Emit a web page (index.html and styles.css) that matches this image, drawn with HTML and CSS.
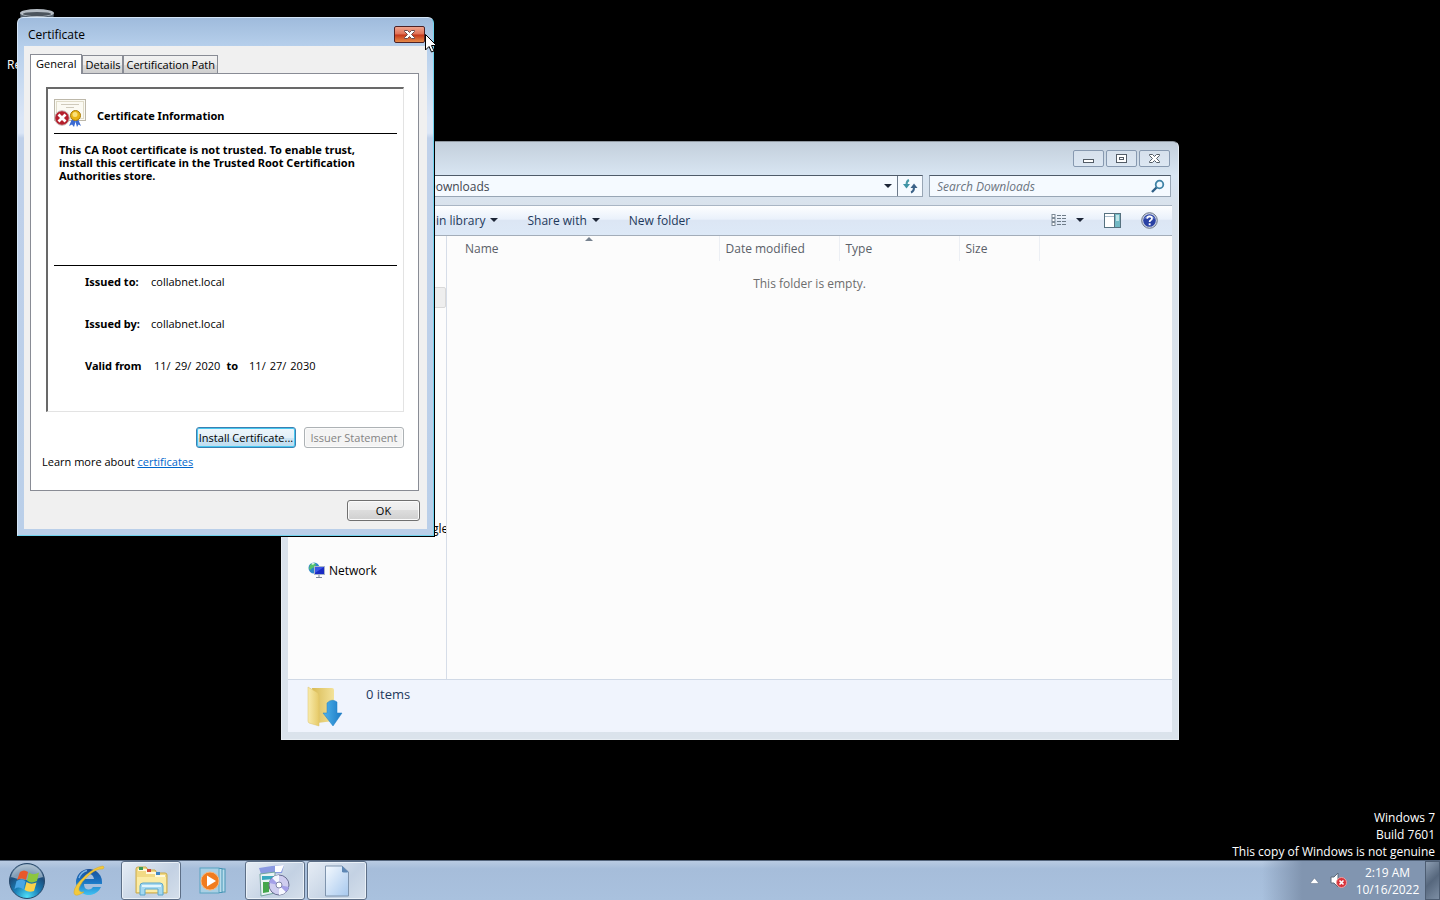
FILE: index.html
```
<!DOCTYPE html>
<html lang="en">
<head>
<meta charset="utf-8">
<meta name="viewport" content="width=device-width, initial-scale=1.0">
  <title>Desktop</title>
  <link rel="stylesheet" href="styles.css">
</head>
<body>

  <main class="desktop">
    <div class="desktop-icon">
      <svg width="36" height="48" viewBox="0 0 36 48">
        <path d="M1 5 L6 47 H30 L35 5Z" fill="#56626e"/>
        <ellipse cx="18" cy="5" rx="17" ry="4" fill="#b4bcc4"/>
        <ellipse cx="18" cy="6" rx="14" ry="2" fill="#4c555e"/>
      </svg>
      <span>Re</span>
    </div>

    <!-- explorer -->
    <section class="window explorer">
      <header class="explorer-title">
        <button class="caption" aria-label="Minimize">
          <svg width="13" height="11" viewBox="0 0 13 11"><rect x="1.5" y="6.5" width="10" height="3" fill="#fff" stroke="#535c66"/></svg>
        </button>
        <button class="caption" aria-label="Maximize">
          <svg width="13" height="11" viewBox="0 0 13 11"><rect x="1.5" y="1.5" width="10" height="8" fill="#fff" stroke="#535c66"/><rect x="4.5" y="4.5" width="4" height="2" fill="#fff" stroke="#535c66"/></svg>
        </button>
        <button class="caption" aria-label="Close">
          <svg width="13" height="11" viewBox="0 0 13 11"><path d="M1.500 1.500H4.500L6.500 3.500L8.500 1.500H11.500V2.500L8.500 5.500L11.500 8.500V9.500H8.500L6.500 7.500L4.500 9.500H1.500V8.500L4.500 5.500L1.500 2.500Z" fill="#fff" stroke="#535c66"/></svg>
        </button>
      </header>

      <div class="explorer-nav">
        <div class="address">
          <span class="address-text">Downloads</span>
          <button class="drop" aria-label="Previous locations"><i class="caret"></i></button>
          <button class="refresh" aria-label="Refresh">
            <svg width="16" height="16" viewBox="0 0 16 16">
              <path d="M7 2 Q4.500 3 4.500 7" fill="none" stroke="#4a9aa8" stroke-width="2"/>
              <path d="M1 6 H8 L4.500 10.500Z" fill="#3e93a5"/>
              <path d="M9 14.500 Q12 13.500 12 9.500" fill="none" stroke="#3b6288" stroke-width="2"/>
              <path d="M8.500 10 H15.500 L12 5.500Z" fill="#3b6288"/>
            </svg>
          </button>
        </div>
        <div class="search">
          <input type="text" placeholder="Search Downloads" aria-label="Search Downloads">
          <svg width="14" height="14" viewBox="0 0 14 14">
            <path d="M1 13 L6 8" stroke="#2f5f86" stroke-width="2.4"/>
            <circle cx="8.5" cy="5.5" r="3.8" fill="#eef8ff" stroke="#3f83a6" stroke-width="1.8"/>
          </svg>
        </div>
      </div>

      <div class="toolbar">
        <button class="tool">Include in library <i class="caret"></i></button>
        <button class="tool">Share with <i class="caret"></i></button>
        <button class="tool">New folder</button>
        <div class="toolbar-right">
          <button class="tool" aria-label="Change your view">
            <svg width="16" height="14" viewBox="0 0 16 14">
              <g fill="#fff" stroke="#7d8a97"><rect x="1" y="1.500" width="3" height="3"/><rect x="1" y="5.500" width="3" height="3"/><rect x="1" y="9.500" width="3" height="3"/></g>
              <path d="M6 2.500H10M11 2.500H15M6 5.500H10M11 5.500H15M6 8.500H10M11 8.500H15M6 11.500H10M11 11.500H15" stroke="#6d7b88"/>
            </svg>
            <i class="caret"></i>
          </button>
          <button class="tool" aria-label="Show the preview pane">
            <svg width="17" height="15" viewBox="0 0 17 15">
              <rect x="0.500" y="0.500" width="16" height="14" fill="#fff" stroke="#56717f"/>
              <path d="M1 3.500H10" stroke="#a9bccb"/>
              <rect x="10" y="1" width="6" height="13" fill="#73b9c4"/>
              <path d="M10.500 1V14" stroke="#56717f"/>
              <rect x="12" y="2" width="3" height="6" fill="#bfe4e8"/>
            </svg>
          </button>
          <button class="tool" aria-label="Get help">
            <svg width="17" height="17" viewBox="0 0 17 17">
              <circle cx="8.500" cy="8.500" r="7.800" fill="#cfd6e4" stroke="#6a7488"/>
              <circle cx="8.500" cy="8.500" r="6.300" fill="#2a41a4"/>
              <path d="M3 7 A6 6 0 0 1 14 7 Q8 4 3 7Z" fill="#6f86d2"/>
              <path d="M6.200 6.800 Q6.200 4.400 8.600 4.400 Q11 4.400 11 6.400 Q11 7.600 9.600 8.300 Q8.600 8.900 8.600 10" fill="none" stroke="#fff" stroke-width="1.700"/>
              <rect x="7.700" y="11.300" width="1.900" height="1.900" fill="#fff"/>
            </svg>
          </button>
        </div>
      </div>

      <div class="explorer-body">
        <nav class="tree">
          <div class="tree-selected"></div>
          <div class="tree-drive">gle</div>
          <div class="tree-item">
            <svg width="17" height="17" viewBox="0 0 17 17">
              <circle cx="6" cy="6" r="5.500" fill="#2b86c8"/>
              <path d="M2 3 Q5 0 8 2 Q7 6 4 6 Q3 9 1 7Z" fill="#55c26b"/>
              <path d="M3 2 Q5 0 7 1 L5 3Z" fill="#d7f5e0"/>
              <rect x="6.500" y="4.500" width="10" height="8" fill="#1a2bc4" stroke="#a8b4c8"/>
              <path d="M7 5H16L7 11Z" fill="#3b56e6"/>
              <path d="M11 13V15M8 15.500H14" stroke="#7c8798"/>
            </svg>
            <a href="#">Network</a>
          </div>
        </nav>
        <div class="files">
          <table>
            <thead>
              <tr>
                <th class="col-name">Name<i class="sort"></i></th>
                <th class="col">Date modified</th>
                <th class="col">Type</th>
                <th class="col-size">Size</th>
                <th></th>
              </tr>
            </thead>
            <tbody>
              <tr><td colspan="5">This folder is empty.</td></tr>
            </tbody>
          </table>
        </div>
      </div>

      <footer class="details">
        <svg width="40" height="44" viewBox="0 0 40 44">
          <defs>
            <linearGradient id="fold" x1="0" x2="1"><stop offset="0" stop-color="#f8ebac"/><stop offset="1" stop-color="#e6ca68"/></linearGradient>
            <linearGradient id="back" x1="0" x2="1"><stop offset="0" stop-color="#d9bb55"/><stop offset="1" stop-color="#f3e29a"/></linearGradient>
            <linearGradient id="arrow" x1="0" x2="1"><stop offset="0" stop-color="#4fb4ec"/><stop offset="1" stop-color="#1c79c4"/></linearGradient>
          </defs>
          <path d="M6 3 H26 Q28 3 28 5 V36 L11 38Z" fill="url(#back)"/>
          <path d="M2 2 L12 8 Q13 9 13 11 V41 L3 38 Q2 37 2 36Z" fill="url(#fold)" stroke="#dcc064" stroke-width="0.500"/>
          <path d="M21 18 Q26 13 31 17 V28 H36 L27 41 L17 28 H21Z" fill="url(#arrow)" stroke="#1d7fc4" stroke-width="0.500"/>
        </svg>
        <span>0 items</span>
      </footer>
    </section>

    <!-- certificate dialog -->
    <section class="window cert">
      <header class="cert-title">
        <span>Certificate</span>
        <button class="cert-close" aria-label="Close">
          <svg width="13" height="11" viewBox="0 0 13 11"><path d="M1.500 1.500H4.500L6.500 3.500L8.500 1.500H11.500V2.500L8.500 5.500L11.500 8.500V9.500H8.500L6.500 7.500L4.500 9.500H1.500V8.500L4.500 5.500L1.500 2.500Z" fill="#fff" stroke="#6b4a4a"/></svg>
        </button>
      </header>
      <div class="cert-body">
        <div class="tabs">
          <button class="tab tab-active">General</button>
          <button class="tab">Details</button>
          <button class="tab">Certification Path</button>
        </div>
        <div class="panel">
          <div class="info">
            <div class="info-head">
              <svg width="32" height="30" viewBox="0 0 32 30">
                <rect x="0.500" y="1.500" width="31" height="21" fill="#fbfaf3" stroke="#bdb8aa"/>
                <rect x="2.500" y="3.500" width="27" height="17" fill="none" stroke="#e0dcc9"/>
                <path d="M7 6.500H25M12 9.500H20" stroke="#cfcabb"/>
                <path d="M18 21 L15 28 L18 26.500 L20 29 L22 22Z M24 21 L27 28 L24.500 26.500 L23 29 L21 22Z" fill="#3c6bd2"/>
                <circle cx="21.500" cy="17.500" r="5" fill="#e9b416" stroke="#a97c0c"/>
                <circle cx="21" cy="16.500" r="2.500" fill="#fbe27a"/>
                <circle cx="8" cy="20" r="7.300" fill="#b51f2c" stroke="#c9bcbc"/>
                <path d="M4.500 16.500 L11.500 23.500 M11.500 16.500 L4.500 23.500" stroke="#fff" stroke-width="2.800"/>
              </svg>
              <b>Certificate Information</b>
            </div>
            <p class="message">This CA Root certificate is not trusted. To enable trust, install this certificate in the Trusted Root Certification Authorities store.</p>
            <dl class="fields">
              <div><dt>Issued to:</dt><dd>collabnet.local</dd></div>
              <div><dt>Issued by:</dt><dd>collabnet.local</dd></div>
              <div class="valid"><dt>Valid from</dt><dd><span>11/</span><span>29/</span><span>2020</span><b>to</b><span>11/</span><span>27/</span><span>2030</span></dd></div>
            </dl>
          </div>
          <div class="actions">
            <button class="btn btn-focus">Install Certificate...</button>
            <button class="btn" disabled>Issuer Statement</button>
          </div>
          <p class="learn">Learn more about <a href="#">certificates</a></p>
        </div>
        <div class="cert-footer">
          <button class="btn btn-ok">OK</button>
        </div>
      </div>
    </section>

    <div class="watermark">
      <p>Windows 7</p>
      <p>Build 7601</p>
      <p>This copy of Windows is not genuine</p>
    </div>

    <svg class="cursor" width="12" height="19" viewBox="0 0 12 19">
      <path d="M0.500 0.500 V16 L4 12.500 L6.500 18 L9 17 L6.500 11.500 H11.500Z" fill="#fff" stroke="#000"/>
    </svg>
  </main>

  <footer class="taskbar">
    <button class="start" aria-label="Start">
      <svg width="38" height="38" viewBox="0 0 38 38">
        <defs>
          <radialGradient id="orb" cx="0.5" cy="0.95" r="0.9"><stop offset="0" stop-color="#4fe0f8"/><stop offset="0.4" stop-color="#1a80b8"/><stop offset="0.75" stop-color="#1d4c7a"/><stop offset="1" stop-color="#7f9bb5"/></radialGradient>
        </defs>
        <circle cx="19" cy="19" r="17.500" fill="url(#orb)" stroke="#27486a"/>
        <path d="M3 15 A16.500 16.500 0 0 1 35 15 Q19 21 3 15Z" fill="#d2dee8" opacity="0.550"/>
        <path d="M12 10 Q16 7 20 10 L18 18 Q14 15 9 18Z" fill="#e8582a"/>
        <path d="M21 10.500 Q25 14 31 10.500 L29 19 Q23 22 19 18.500Z" fill="#8cc63e"/>
        <path d="M8.500 19 Q13 16 17.500 19 L15.500 27.500 Q11 24 6.500 27Z" fill="#4aa6e4"/>
        <path d="M18.500 20 Q23 23 28.500 20.500 L26 29 Q21 31 16.500 28Z" fill="#fbd24a"/>
      </svg>
    </button>
    <button class="task" aria-label="Internet Explorer">
      <svg width="34" height="34" viewBox="0 0 34 34">
        <defs><linearGradient id="ie" x1="0" y1="0" x2="0" y2="1"><stop offset="0" stop-color="#1c4f98"/><stop offset="0.5" stop-color="#1b75c4"/><stop offset="1" stop-color="#3ec2f2"/></linearGradient></defs>
        <path d="M30 18 A13 13 0 1 0 29 23 H21 Q19 26 16 25.500 Q12 25 12 20 H30Z M12 15 Q13 10 17 10 Q21 10 22 15Z" fill="url(#ie)" fill-rule="evenodd"/>
        <path d="M7 14 Q9 8 15 6.500" fill="none" stroke="#7fb5e6" stroke-width="1.500"/>
        <path d="M31 2 Q23 3 13 12 Q2 22 2 28 Q2 32 6 31 Q9 30 12 28 Q6 29 7 24 Q9 18 17 11 Q25 4 31 5 Q33 3 31 2Z" fill="#f3c93c" stroke="#d9a820" stroke-width="0.500"/>
      </svg>
    </button>
    <button class="task task-open" aria-label="Windows Explorer">
      <svg width="34" height="34" viewBox="0 0 34 34">
        <path d="M2 29 V5 Q2 3 4 3 H12 L14 6 H21 L23 9 H31 Q33 9 33 11 V29Z" fill="#f2da84" stroke="#c9a94c"/>
        <path d="M4 6H13V9H22V12H31" fill="none" stroke="#fff9dc" stroke-width="2"/>
        <rect x="5" y="3" width="4" height="3" fill="#3c9a56"/><rect x="13" y="5" width="4" height="3" fill="#cf4a35"/><rect x="22" y="8" width="4" height="3" fill="#3f86c4"/>
        <path d="M3 13H32V28H3Z" fill="#fbeca6"/>
        <path d="M6 31 V22 Q6 19 9 19 H26 Q29 19 29 22 V31 H24 V25 H11 V31Z" fill="#a4d8f0" stroke="#5ba6cc"/>
        <path d="M8 22H27" stroke="#e2f5fd" stroke-width="2"/>
      </svg>
    </button>
    <button class="task" aria-label="Windows Media Player">
      <svg width="28" height="28" viewBox="0 0 28 28">
        <rect x="10" y="2" width="16" height="23" fill="#b8dcec" stroke="#4795b5"/>
        <rect x="6" y="1.500" width="17" height="24" fill="#b8dcec" stroke="#4795b5"/>
        <rect x="1" y="1" width="19" height="25" fill="#a9cfe4" stroke="#58a4c2"/>
        <circle cx="11" cy="14" r="9" fill="#f07c1e" stroke="#f8b67a"/>
        <path d="M8 8.500 L17 14 L8 19.500Z" fill="#fff"/>
      </svg>
    </button>
    <button class="task task-open" aria-label="Installer">
      <svg width="34" height="34" viewBox="0 0 34 34">
        <path d="M1 4 L14 2 L26 1 L24 9 L3 10Z" fill="#8b9ae2"/>
        <path d="M17 2 L26 1 L23 8 L17 8Z" fill="#fff"/>
        <path d="M2 10 L17 8 V29 L3 32Z" fill="#e9f3f4" stroke="#74a5a0"/>
        <path d="M4 12H16V15L4 16Z" fill="#39a9c0"/>
        <path d="M9 18H14V25H9Z" fill="#e78538"/><path d="M5 18H11V28L5 29Z" fill="#43a64b"/>
        <circle cx="21" cy="21" r="10" fill="#cfcdf0" stroke="#696e92"/>
        <path d="M21 21 L14 14 A10 10 0 0 1 21 11Z M21 21 L28 28 A10 10 0 0 1 21 31Z" fill="#f5f7ff"/>
        <path d="M21 21 L11 19 A10 10 0 0 1 14 14Z M21 21L31 23A10 10 0 0 1 28 28Z" fill="#a4a0e8"/>
        <circle cx="21" cy="21" r="3" fill="#fff" stroke="#8186a8"/>
      </svg>
    </button>
    <button class="task task-open" aria-label="File">
      <svg width="26" height="32" viewBox="0 0 26 32">
        <defs><linearGradient id="page" x1="0" y1="0" x2="1" y2="1"><stop offset="0" stop-color="#f4f9fe"/><stop offset="1" stop-color="#a7c8ee"/></linearGradient></defs>
        <path d="M1.500 1 H18 L24.500 7 V31 H1.500Z" fill="url(#page)" stroke="#7f94ad"/>
        <path d="M18 1 L24.500 7 Q21 8 18 7Z" fill="#5e87b4"/>
      </svg>
    </button>
    <div class="tray">
      <button class="tray-icon" aria-label="Show hidden icons"><svg width="9" height="6" viewBox="0 0 9 6"><path d="M4.500 0 L9 5.500H0Z" fill="#fff" stroke="#5c6f86" stroke-width="0.500"/></svg></button>
      <button class="tray-icon" aria-label="Volume">
        <svg width="17" height="17" viewBox="0 0 17 17">
          <path d="M1 5H4L8 1V15L4 11H1Z" fill="#fff" stroke="#5d6b7b"/>
          <circle cx="11.500" cy="10.500" r="5" fill="#d8333b" stroke="#f0a0a0"/>
          <path d="M9.500 8.500 L13.500 12.500 M13.500 8.500 L9.500 12.500" stroke="#fff" stroke-width="1.600"/>
        </svg>
      </button>
      <div class="clock"><span>2:19 AM</span><span>10/16/2022</span></div>
      <button class="show-desktop" aria-label="Show desktop"></button>
    </div>
  </footer>

</body>
</html>
```
FILE: styles.css
```
* {
  margin: 0;
  padding: 0;
  box-sizing: border-box;
}

body {
  min-height: 100vh;
  background: #000;
  display: flex;
  flex-direction: column;
  font-family: "Open Sans", "Noto Sans", sans-serif;
  font-size: 12px;
  overflow: hidden;
}

button, input {
  font: inherit;
  color: inherit;
  border: none;
  background: none;
}

button {
  display: flex;
  align-items: center;
  justify-content: center;
}

svg { display: block; flex: none; }

.desktop {
  flex: 1;
  position: relative;
}

.desktop-icon {
  width: 74px;
  padding-top: 8px;
  color: #fff;
}

.desktop-icon svg { margin: 0 auto; }
.desktop-icon span { padding-left: 7px; }

.window { position: absolute; }

.caret {
  border: 4px solid transparent;
  border-top-color: #1c2536;
  border-bottom: none;
}

/* explorer window */

.explorer {
  left: 281px;
  right: 261px;
  top: 141px;
  bottom: 120px;
  padding: 0 6px 7px;
  display: flex;
  flex-direction: column;
  border: 1px solid #e8eef4;
  border-top-color: #8f979f;
  border-radius: 6px 6px 0 0;
  background: linear-gradient(#c3cfdb, #d9e6f3 34px, #d9e2ec 64px, #dbe3ec);
}

.explorer-title {
  height: 33px;
  padding: 8px 2px 0 0;
  display: flex;
  justify-content: flex-end;
  gap: 2px;
}

.caption {
  width: 31px;
  height: 17px;
  border: 1px solid #8799b0;
  border-radius: 2px;
  background: rgba(235, 243, 252, 0.4);
}

.explorer-nav {
  height: 30px;
  padding-right: 1px;
  display: flex;
  align-items: flex-start;
  gap: 6px;
}

.address, .search {
  height: 22px;
  display: flex;
  align-items: center;
  border: 1px solid #98a6b5;
  border-top-color: #4f5b69;
  background: #f5faff;
}

.address {
  flex: 1;
  padding-left: 138px;
  color: #3f4650;
}

.address-text { flex: 1; }

.drop {
  width: 18px;
  height: 20px;
}

.refresh {
  width: 25px;
  height: 20px;
  border-left: 1px solid #6c7a8a;
}

.search {
  width: 242px;
  padding: 0 5px 0 7px;
}

.search input {
  flex: 1;
  min-width: 0;
  font-style: italic;
  outline: none;
}

.search input::placeholder { color: #6b7480; }

.toolbar {
  height: 31px;
  padding: 0 14px 1px 104px;
  display: flex;
  align-items: center;
  gap: 29px;
  color: #1e395b;
  border-top: 1px solid #a9b5c4;
  border-bottom: 1px solid #a3adb9;
  background: linear-gradient(#fdfeff, #eaf1fb 45%, #dce6f4 50%, #dde9f7);
}

.tool {
  gap: 5px;
  white-space: nowrap;
}

.toolbar-right {
  margin-left: auto;
  display: flex;
  align-items: center;
  gap: 20px;
}

.toolbar-right .tool { gap: 9px; }

.explorer-body {
  flex: 1;
  display: flex;
  background: #fcfcfc;
}

.tree {
  width: 159px;
  border-right: 1px solid #d6dde8;
  overflow: hidden;
}

.tree-selected {
  height: 21px;
  margin-top: 51px;
  border: 1px solid #d9d9d9;
  border-radius: 2px;
  background: #eeeeee;
}

.tree-drive {
  height: 22px;
  margin-top: 210px;
  padding-left: 144px;
  line-height: 22px;
}

.tree-item {
  margin-top: 19px;
  padding-left: 20px;
  height: 22px;
  display: flex;
  align-items: center;
  gap: 4px;
}

.tree-item a {
  color: #000;
  text-decoration: none;
}

.files { flex: 1; }

.files table {
  width: 100%;
  table-layout: fixed;
  border-collapse: collapse;
}

.files th {
  height: 25px;
  padding-left: 6px;
  font-weight: normal;
  text-align: left;
  color: #5a6068;
  border-right: 1px solid #eceff4;
}

.files th:last-child { border: none; }

.files .col-name {
  width: 272px;
  padding-left: 18px;
  position: relative;
}

.col { width: 120px; }
.col-size { width: 80px; }

.sort {
  position: absolute;
  top: 1px;
  left: 51%;
  border: 4px solid transparent;
  border-bottom-color: #77828f;
  border-top: none;
}

.files td {
  padding-top: 14px;
  text-align: center;
  color: #6d6d6d;
}

.details {
  height: 53px;
  padding: 5px 18px 3px;
  display: flex;
  gap: 20px;
  border-top: 1px solid #d0d9e6;
  background: #f0f4fd;
  color: #1e395b;
  font-size: 13px;
}

/* certificate dialog */

.cert {
  left: 17px;
  top: 17px;
  width: 417px;
  padding: 0 6px 6px;
  border: 1px solid #d4e6f8;
  border-right-color: #6fd3ee;
  border-bottom-color: #6fd3ee;
  border-radius: 6px 6px 0 0;
  box-shadow: 1px 1px 0 #000;
  background: linear-gradient(#9fbbdc, #b6cfeb 28px, #dbe6f6 100px, #dbe6f6 115px, #c0d1ea 120px, #bacfe9);
  font-size: 11px;
}

.cert-title {
  height: 28px;
  padding: 6px 2px 2px 4px;
  display: flex;
  align-items: center;
  justify-content: space-between;
  font-size: 12px;
}

.cert-close {
  width: 31px;
  height: 17px;
  border: 1px solid #4d2226;
  border-radius: 2px;
  background: linear-gradient(#f0a48e, #e07055 48%, #c4361a 52%, #e58a48);
}

.cert-body {
  padding: 8px 8px 8px 6px;
  background: #f0f0f0;
}

.tabs {
  display: flex;
  align-items: flex-end;
}

.tab {
  height: 18px;
  padding: 0 2px;
  border: 1px solid #898c95;
  border-bottom: none;
  background: linear-gradient(#f2f2f2, #ebebeb 50%, #dddddd 50%, #cfcfcf);
}

.tab-active {
  height: 20px;
  margin-bottom: -1px;
  padding: 0 5px 2px;
  background: #fff;
  position: relative;
}

.panel {
  padding: 13px 14px 20px 15px;
  border: 1px solid #898c95;
  background: #fff;
}

.info {
  min-height: 325px;
  padding: 9px 6px;
  border: 1px solid #e3e3e3;
  border-top: 2px solid #696969;
  border-left: 2px solid #696969;
}

.info-head {
  height: 36px;
  display: flex;
  align-items: flex-start;
  gap: 11px;
  border-bottom: 1px solid #000;
}

.info-head b { padding-top: 10px; }

/* right padding wraps the warning after "trust," */
.message {
  min-height: 132px;
  padding: 9px 30px 0 5px;
  line-height: 13px;
  font-weight: bold;
  border-bottom: 1px solid #000;
}

.info b, .message, .fields dt { font-family: "Noto Sans", sans-serif; }

.fields { padding: 8px 0 0 31px; }

.fields div {
  height: 42px;
  display: flex;
  line-height: 16px;
}

.fields dt {
  width: 66px;
  font-weight: bold;
}

.fields dd { display: flex; }
.fields .valid dd { gap: 4px; padding-left: 3px; }
.fields .valid b { padding: 0 7px 0 2px; }

.actions {
  margin-top: 15px;
  display: flex;
  justify-content: flex-end;
  gap: 8px;
}

.btn {
  width: 100px;
  height: 21px;
  border: 1px solid #707070;
  border-radius: 3px;
  box-shadow: inset 0 0 0 1px #fbfbfb;
  background: linear-gradient(#f2f2f2, #ebebeb 50%, #dddddd 50%, #cfcfcf);
  white-space: nowrap;
}

.btn-focus {
  border-color: #3c7fb1;
  box-shadow: inset 0 0 0 1px #48c8f0;
  background: linear-gradient(#eef6fb, #e3f0f8 50%, #cfe5f3 50%, #bddcf0);
}

.btn:disabled {
  border-color: #adb2b5;
  background: #f4f4f4;
  color: #838383;
}

.btn-ok { width: 73px; }

.learn {
  margin: 6px 0 0 -4px;
  line-height: 16px;
}

.learn a { color: #0066cc; }

.cert-footer {
  margin: 9px -1px 0 0;
  display: flex;
  justify-content: flex-end;
}

/* drawn over the desktop */

.watermark {
  position: absolute;
  right: 5px;
  bottom: 0;
  color: #fff;
  text-align: right;
  line-height: 17px;
}

.cursor {
  position: absolute;
  left: 425px;
  top: 34px;
}

/* taskbar */

.taskbar {
  height: 40px;
  display: flex;
  gap: 2px;
  border-top: 1px solid #54657c;
  background: linear-gradient(#b9cbe2, #a6bdda 20%, #a9c1de);
}

.start { width: 57px; padding-right: 3px; }

.task { width: 60px; }

.task-open {
  border: 1px solid #5d6f87;
  border-radius: 3px;
  box-shadow: inset 0 0 0 1px #eaf1f8;
  background: linear-gradient(135deg, #e6edf5, #c3d1e3 60%, #d5dfeb);
}

.tray {
  margin-left: auto;
  padding-left: 40px;
  display: flex;
  align-items: center;
  color: #fff;
  background: linear-gradient(90deg, transparent, #8195b0 40px);
}

.tray-icon { width: 24px; }

.clock {
  width: 75px;
  display: flex;
  flex-direction: column;
  align-items: center;
  line-height: 17px;
}

.show-desktop {
  width: 15px;
  height: 39px;
  border: 1px solid #4d5d72;
  background: linear-gradient(135deg, #8c9db2, #56677d 50%, #7d8ea4);
}
```
